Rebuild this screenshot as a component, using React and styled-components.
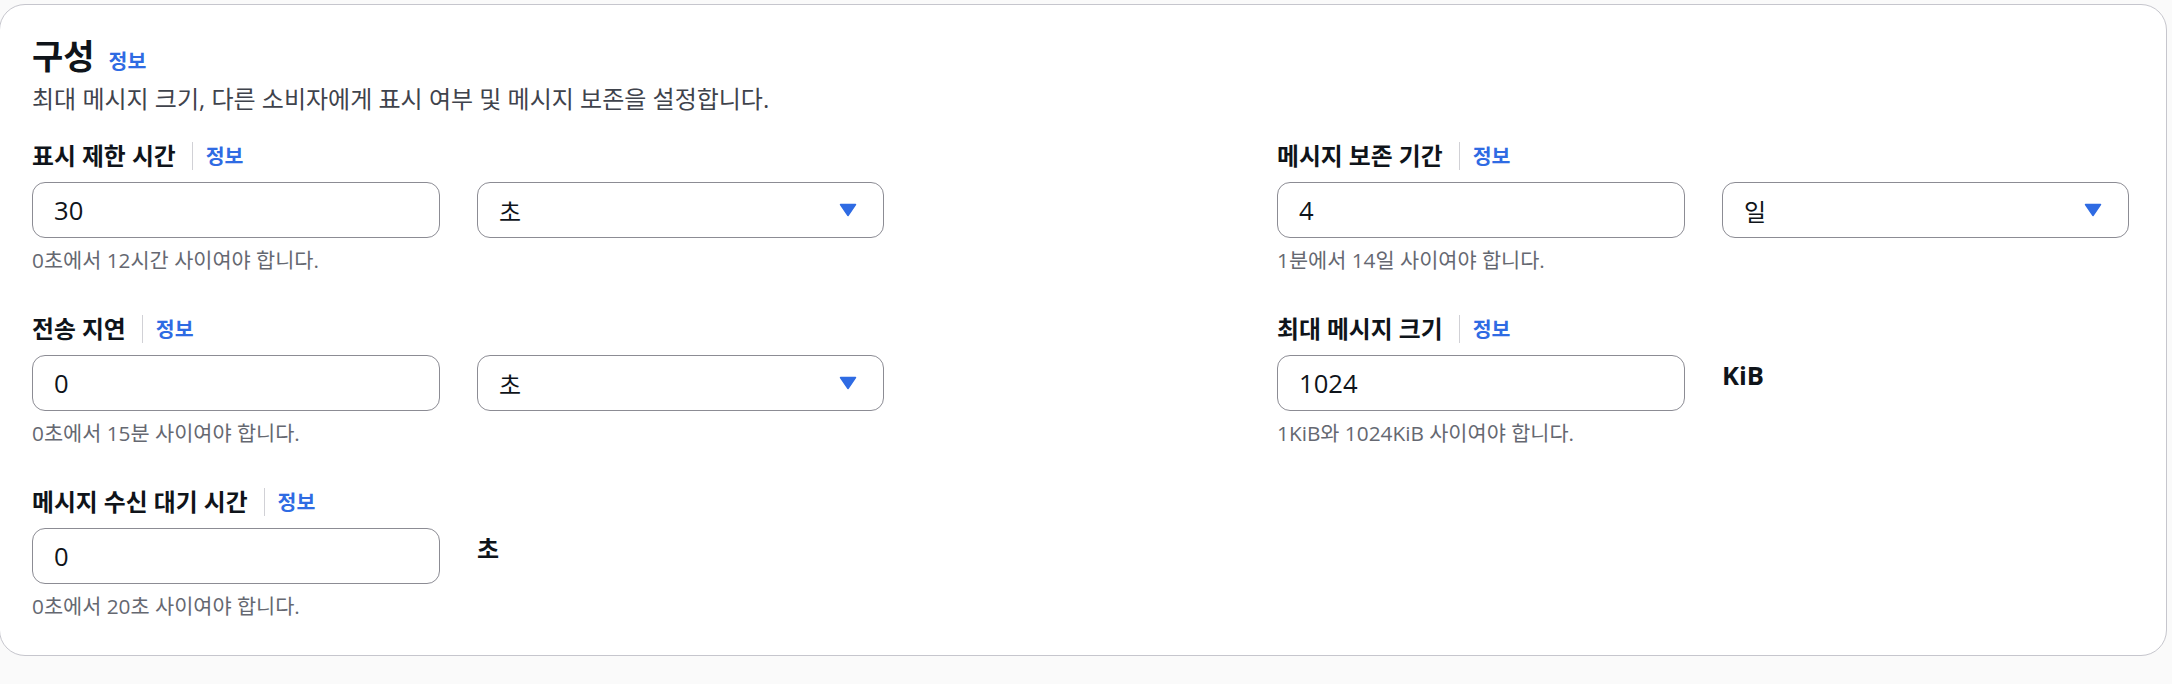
import React from 'react';
import styled, { createGlobalStyle } from 'styled-components';

// 구성 패널 (SQS 큐 설정 화면)
const GlobalStyle = createGlobalStyle`
  html, body {
    margin: 0;
    padding: 0;
    background: #fafafa;
  }
  body {
    font-family: 'Open Sans', 'Noto Sans CJK KR', sans-serif;
    color: #0f141a;
    overflow: hidden;
  }
`;

const leftFields = [
  { label: '표시 제한 시간', value: '30', unit: '초', select: true, hint: '0초에서 12시간 사이여야 합니다.' },
  { label: '전송 지연', value: '0', unit: '초', select: true, hint: '0초에서 15분 사이여야 합니다.' },
  { label: '메시지 수신 대기 시간', value: '0', unit: '초', hint: '0초에서 20초 사이여야 합니다.' },
];

const rightFields = [
  { label: '메시지 보존 기간', value: '4', unit: '일', select: true, hint: '1분에서 14일 사이여야 합니다.' },
  { label: '최대 메시지 크기', value: '1024', unit: 'KiB', unitSize: '25.6px', hint: '1KiB와 1024KiB 사이여야 합니다.' },
];

const Caret = () => (
  <svg width='18' height='14' viewBox='0 0 18 14'>
    <path d='M1.5 1.5 H16.5 L9 12.5 Z' fill='#2f6be3' stroke='#2f6be3' strokeWidth='1.5' strokeLinejoin='round' />
  </svg>
);

const Field = ({ field }) => {
  return (
    <FieldBlock>
      <LabelRow>
        <LabelText>{field.label}</LabelText>
        <Divider />
        <InfoLink>정보</InfoLink>
      </LabelRow>
      <Controls>
        <TextInput readOnly value={field.value} />
        {field.select ? (
          <SelectBox>
            <span>{field.unit}</span>
            <Caret />
          </SelectBox>
        ) : (
          <Unit $size={field.unitSize}>{field.unit}</Unit>
        )}
      </Controls>
      <Hint>{field.hint}</Hint>
    </FieldBlock>
  );
};

const App = () => {
  return (
    <Page>
      <GlobalStyle />
      <Card>
        <Header>
          <Title>
            구성
            <HeadingLink>정보</HeadingLink>
          </Title>
          <Description>
            최대 메시지 크기, 다른 소비자에게 표시 여부 및 메시지 보존을 설정합니다.
          </Description>
        </Header>
        <FieldsGrid>
          <Column>
            {leftFields.map((f, i) => (
              <Field key={i} field={f} />
            ))}
          </Column>
          <Column>
            {rightFields.map((f, i) => (
              <Field key={i} field={f} />
            ))}
          </Column>
        </FieldsGrid>
      </Card>
    </Page>
  );
};

const Page = styled.div`
  width: 2172px;
  height: 684px;
  box-sizing: border-box;
  padding: 4px 5px 0 0;
  overflow: hidden;
`;

const Card = styled.section`
  margin-left: -1px;
  background: #ffffff;
  border: 1px solid #c6c6cd;
  border-radius: 26px;
  padding: 32px 32px 36px 32px;
`;

const Header = styled.div`
  display: flex;
  flex-direction: column;
  gap: 8px;
`;

const Title = styled.h2`
  margin: 0;
  height: 38px;
  display: flex;
  align-items: baseline;
  font-size: 34px;
  line-height: 38px;
  font-weight: 700;
  color: #0f141a;
`;

const HeadingLink = styled.a`
  margin-left: 14px;
  font-size: 20.5px;
  line-height: 20px;
  font-weight: 700;
  color: #2f6be3;
  cursor: pointer;
`;

const Description = styled.p`
  margin: 0;
  font-size: 24px;
  line-height: 32px;
  color: #3f434c;
`;

const FieldsGrid = styled.div`
  margin-top: 25px;
  display: grid;
  grid-template-columns: 1fr 857px;
`;

const Column = styled.div`
  display: flex;
  flex-direction: column;
  gap: 40px;
`;

const FieldBlock = styled.div`
  display: flex;
  flex-direction: column;
`;

const LabelRow = styled.div`
  display: flex;
  align-items: center;
  height: 32px;
`;

const LabelText = styled.label`
  font-size: 23.8px;
  line-height: 32px;
  font-weight: 700;
  color: #0f141a;
`;

const Divider = styled.span`
  width: 1px;
  height: 28px;
  margin: 0 13px 0 16px;
  background: #d1d1d6;
`;

const InfoLink = styled.a`
  font-size: 20.5px;
  line-height: 32px;
  font-weight: 700;
  color: #2f6be3;
  cursor: pointer;
`;

const Controls = styled.div`
  margin-top: 10px;
  display: flex;
  align-items: flex-start;
  gap: 37px;
`;

const TextInput = styled.input`
  box-sizing: border-box;
  width: 408px;
  height: 56px;
  padding: 0 21px;
  border: 1px solid #8c8c94;
  border-radius: 13px;
  background: #ffffff;
  font-family: inherit;
  font-size: 25.6px;
  color: #0f141a;
  outline: none;
`;

const SelectBox = styled.div`
  box-sizing: border-box;
  width: 407px;
  height: 56px;
  padding: 0 26px 0 21px;
  border: 1px solid #8c8c94;
  border-radius: 13px;
  background: #ffffff;
  display: flex;
  align-items: center;
  justify-content: space-between;
  font-size: 24px;
  color: #0f141a;
  cursor: pointer;
  svg {
    display: block;
  }
`;

const Unit = styled.span`
  padding-top: 5px;
  font-size: ${(p) => p.$size || '24px'};
  line-height: 32px;
  font-weight: 700;
  color: #0f141a;
`;

const Hint = styled.div`
  margin-top: 9px;
  font-size: 20.8px;
  line-height: 26px;
  color: #656871;
`;

export default App;
